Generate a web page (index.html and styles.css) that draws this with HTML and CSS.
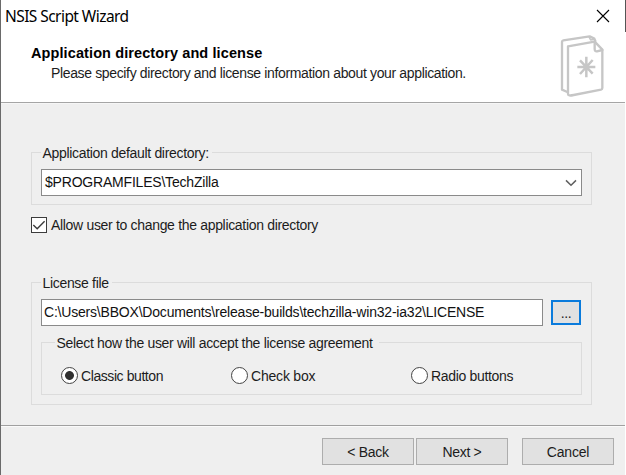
FILE: index.html
```
<!DOCTYPE html>
<html lang="en">
<head>
<meta charset="utf-8">
<title>NSIS Script Wizard</title>
<link rel="stylesheet" href="styles.css">
</head>
<body>
<main class="dialog">
  <header class="banner">
    <div class="banner-text">
      <div class="title">NSIS Script Wizard</div>
      <h1 class="heading">Application directory and license</h1>
      <p class="subheading">Please specify directory and license information about your application.</p>
    </div>
    <div class="banner-side">
      <svg class="close" width="14" height="14" viewBox="0 0 14 14"><path d="M1 1 13 13M13 1 1 13"/></svg>
      <svg class="pages" width="44" height="64" viewBox="0 0 132 192">
        <path d="M22 171 6 164V20Q6 17 10 16L89 4 103 11 106 18"/>
        <path d="M24 34 104 20 127 44V159Q127 163 123 164L41 180Q24 184 24 177Z"/>
        <path class="fold" d="M104 20V42Q104 50 111 49L127 45"/>
        <path class="thin" d="M88 7 92 15 100 13"/>
        <path class="star" d="M79 65V127M52 96H106M60 76 98 116M98 75 60 117"/>
      </svg>
    </div>
  </header>

  <section class="content">
    <fieldset class="group directory">
      <legend>Application default directory:</legend>
      <div class="field combo">
        <span class="ls-dir">$PROGRAMFILES\TechZilla</span>
        <svg width="12" height="8" viewBox="0 0 12 8"><path d="M1 1.4 6 6.2 11 1.4"/></svg>
      </div>
    </fieldset>

    <div class="check">
      <span class="box"><svg width="14" height="14" viewBox="0 0 14 14"><path d="M1.3 7 5.2 10.8 12.6 3.2"/></svg></span>
      <span>Allow user to change the application directory</span>
    </div>

    <fieldset class="group license">
      <legend>License file</legend>
      <div class="file-row">
        <div class="field path"><span class="ls-path">C:\Users\BBOX\Documents\release-builds\techzilla-win32-ia32\LICENSE</span></div>
        <div class="browse">...</div>
      </div>
      <fieldset class="group accept">
        <legend>Select how the user will accept the license agreement</legend>
        <div class="radios">
          <div class="radio"><i class="dot on"></i><span class="ls-classic">Classic button</span></div>
          <div class="radio"><i class="dot"></i><span class="ls-check">Check box</span></div>
          <div class="radio"><i class="dot"></i><span>Radio buttons</span></div>
        </div>
      </fieldset>
    </fieldset>
  </section>

  <footer class="actions">
    <div class="button">&lt; Back</div>
    <div class="button">Next &gt;</div>
    <div class="button cancel">Cancel</div>
  </footer>
</main>
</body>
</html>
```

FILE: styles.css
```
* { box-sizing: border-box; }

body {
  margin: 0;
  background: linear-gradient(#555 32px, #fff 32px);
  color: #1c1c1c;
  font: 14px/16px "Liberation Sans", Arial, sans-serif;
  letter-spacing: -0.32px;
  white-space: nowrap;
}

svg { display: block; fill: none; }

.dialog {
  display: flex;
  flex-direction: column;
  width: 625px;
  height: 475px;
  border-left: 1px solid #6a6a6a;
  background: #efefef;
}

.banner {
  display: flex;
  justify-content: space-between;
  height: 104px;
  background: #fff;
  border-bottom: 1px solid #f6f6f6;
  box-shadow: inset 0 -1px #a5a5a5;
}

.title {
  padding: 6px 0 0 4px;
  color: #000;
  font: 15.5px/20px "Noto Sans", sans-serif;
  letter-spacing: -0.56px;
}

.heading {
  margin: 19px 0 0 30px;
  color: #000;
  font-size: 14.5px;
  line-height: 16px;
  letter-spacing: 0.1px;
}

.subheading {
  margin: 4px 0 0 50px;
  letter-spacing: -0.355px;
}

.banner-side { padding: 9px 15px 0 0; }
.close { margin-left: 36px; stroke: #000; stroke-width: 1.1; }
.pages { margin-top: 12px; stroke: #c6c6c6; stroke-width: 7; stroke-linejoin: round; stroke-linecap: round; }
.pages .thin { stroke-width: 5; }
.pages .star { stroke-linecap: butt; stroke-width: 7.5; }

.content { height: 321px; padding: 41px 33px 0 30px; }

.group {
  min-width: 0;
  margin: 0;
  padding: 0 9px;
  border: 1px solid #dcdcdc;
}

.group legend { height: 15px; margin: 0; padding: 1px 3px 0 1.5px; line-height: 15px; }

.directory { height: 60px; }

.field {
  display: flex;
  align-items: center;
  height: 27px;
  border: 1px solid #8a8a8a;
  background: #fff;
  color: #111;
}

.combo { justify-content: space-between; margin-top: 9px; padding: 0 4px 1px 3px; }
.combo svg { margin-top: 2px; stroke: #606060; stroke-width: 1.5; }

.check { display: flex; align-items: center; gap: 4px; height: 16px; margin-top: 12px; }
.box { width: 16px; height: 16px; border: 1px solid #3c3c3c; background: #fff; }
.box path { stroke: #3c3c3c; stroke-width: 1.4; }

.license { height: 130px; margin-top: 42px; }
.file-row { display: flex; gap: 8px; margin-top: 9px; }
.path { width: 502px; padding: 0 0 1px 2px; }

.browse {
  width: 30px;
  height: 25px;
  margin-top: 1px;
  border: 2px solid #0a7bdc;
  background: #e1e1e1;
  line-height: 23px;
  text-align: center;
}

.accept { height: 60px; margin-top: 9px; }
.accept legend { margin-left: 4px; padding-right: 6px; letter-spacing: -0.32px; }
.radios { display: grid; grid-template-columns: 170px 180px 1fr; margin-top: 17px; padding-left: 10px; }
.radio { display: flex; align-items: center; gap: 3px; height: 17px; }
.dot { width: 17px; height: 17px; border: 1px solid #444; border-radius: 50%; background: #fff; }
.on { background: radial-gradient(circle, #303030 4px, #fff 4.8px); }

.actions {
  display: flex;
  gap: 2px;
  height: 50px;
  padding: 12px 0 0 321px;
  border-top: 1px solid #a0a0a0;
  box-shadow: inset 0 1px #fafafa;
}

.button {
  width: 92px;
  height: 27px;
  border: 1px solid #adadad;
  background: #e1e1e1;
  line-height: 26px;
  text-align: center;
}

.cancel { margin-left: 12px; letter-spacing: -0.2px; }
.ls-dir { letter-spacing: -0.2px; }
.ls-path { letter-spacing: -0.2px; }
.ls-classic { letter-spacing: -0.42px; }
.ls-check { letter-spacing: -0.2px; }
```
